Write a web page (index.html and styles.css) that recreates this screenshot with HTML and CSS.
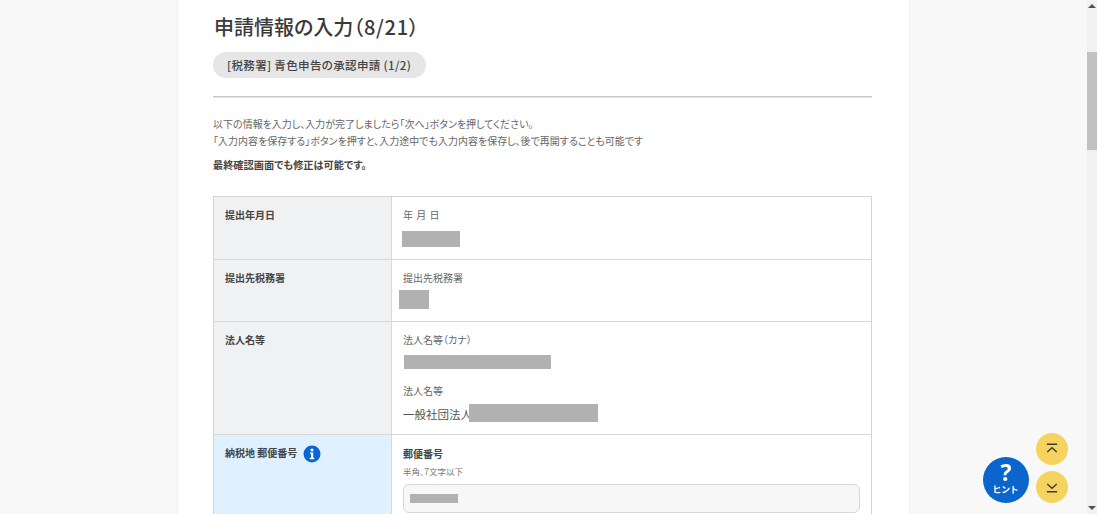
FILE: index.html
```html
<!DOCTYPE html>
<html lang="ja">
<head>
<meta charset="utf-8">
<title>申請情報の入力</title>
<link rel="stylesheet" href="styles.css">
</head>
<body>
<div class="viewport">
  <main class="page">
    <section class="card">
      <h1 class="title">申請情報の入力<span class="count">（8/21）</span></h1>
      <div class="pill">[税務署] 青色申告の承認申請 (1/2)</div>
      <hr class="rule">
      <p class="intro">以下の情報を入力し、入力が完了しましたら「次へ」ボタンを押してください。<br>「入力内容を保存する」ボタンを押すと、入力途中でも入力内容を保存し、後で再開することも可能です</p>
      <p class="note">最終確認画面でも修正は可能です。</p>
      <div class="form">
        <div class="row row-date">
          <div class="head">提出年月日</div>
          <div class="cell">
            <div class="label label-date">年 月 日</div>
            <div class="mask mask-date"></div>
          </div>
        </div>
        <div class="row row-office">
          <div class="head">提出先税務署</div>
          <div class="cell">
            <div class="label">提出先税務署</div>
            <div class="mask mask-office"></div>
          </div>
        </div>
        <div class="row row-name">
          <div class="head">法人名等</div>
          <div class="cell">
            <div class="label">法人名等（カナ）</div>
            <div class="mask mask-kana"></div>
            <div class="label label-gap">法人名等</div>
            <div class="value"><span class="value-text">一般社団法人</span><span class="mask mask-name"></span></div>
          </div>
        </div>
        <div class="row row-zip">
          <div class="head head-info">納税地 郵便番号
            <svg class="info" viewBox="0 0 18 18" aria-hidden="true"><circle cx="9" cy="9" r="8.5" fill="#0a66d0"/><circle cx="9" cy="4.900" r="1.500" fill="#fff"/><path d="M6.900 7.400h3.300v5.400h1.100v1.400H6.800v-1.400h1.300V8.800H6.900z" fill="#fff"/></svg>
          </div>
          <div class="cell">
            <div class="label-strong">郵便番号</div>
            <div class="hint">半角、7文字以下</div>
            <div class="input"><span class="mask mask-zip"></span></div>
          </div>
        </div>
      </div>
    </section>
  </main>
  <aside class="scrollbar">
    <div class="arrow arrow-up"></div>
    <div class="track"><div class="thumb"></div></div>
    <div class="arrow arrow-down"></div>
  </aside>
</div>
<div class="float-top">
  <svg viewBox="0 0 16 14" aria-hidden="true"><path d="M2 1.500h12M2.500 10.500 8 5.500l5.500 5" fill="none" stroke="#3c3c3c" stroke-width="1.600"/></svg>
</div>
<div class="float-bottom">
  <svg viewBox="0 0 16 14" aria-hidden="true"><path d="M2.500 3.500 8 8.500l5.500-5M2 12.500h12" fill="none" stroke="#3c3c3c" stroke-width="1.600"/></svg>
</div>
<div class="float-hint"><span class="q">?</span><span class="hint-text">ヒント</span></div>
</body>
</html>
```
FILE: styles.css
```css
* { box-sizing: border-box; }
html, body { margin: 0; height: 514px; overflow: hidden; }
body {
  font-family: "Noto Sans CJK JP", "Noto Sans", sans-serif;
  color: #333;
  background: #f8f8f8;
  font-feature-settings: "palt";
}
.viewport { display: flex; height: 514px; }
.page { flex: 1; display: flex; justify-content: center; min-width: 0; overflow: hidden; }
.card {
  width: 733px;
  background: #fff;
  border-left: 1px solid #f0f0f0;
  border-right: 1px solid #f0f0f0;
  padding: 12px 37px 0 35px;
  height: 800px;
  flex: none;
}
.title { margin: 0; font-size: 20px; line-height: 30px; font-weight: 500; color: #3a3a3a; padding-left: 1px; }
.count { letter-spacing: .7px; }
.pill {
  margin-top: 10px;
  width: 213px;
  height: 26px;
  border-radius: 13px;
  background: #e6e6e6;
  font-size: 11.5px;
  font-weight: 500;
  line-height: 26px;
  padding-left: 14px;
  letter-spacing: .35px;
  color: #444;
}
.rule { margin: 18px 0 0; border: 0; border-top: 1px solid #c8c8c8; border-bottom: 1px solid #e4e4e4; height: 2px; }
.intro { margin: 17px 0 0; font-size: 10px; line-height: 17px; color: #666; }
.note { margin: 7px 0 0; font-size: 10.2px; line-height: 17px; font-weight: 700; color: #444; }
.form { margin-top: 23px; border: 1px solid #d4d4d4; border-bottom: 0; width: 659px; }
.row { display: flex; border-bottom: 1px solid #d8d8d8; }
.row-date { height: 63px; }
.row-office { height: 62px; }
.row-name { height: 113px; }
.row-zip { height: 200px; }
.head {
  width: 178px;
  flex: none;
  background: #f0f1f3;
  border-right: 1px solid #d8d8d8;
  padding: 10px 0 0 11px;
  font-size: 10px;
  line-height: 16px;
  font-weight: 700;
  color: #444;
}
.row-zip .head { background: #dff0ff; }
.head-info { display: flex; align-items: flex-start; gap: 6px; }
.info { width: 18px; height: 18px; flex: none; }
.cell { flex: 1; padding: 10px 11px 0 11px; min-width: 0; }
.label { font-size: 10px; line-height: 16px; color: #666; }
.label-date { word-spacing: 1px; }
.label-gap { margin-top: 14px; }
.label-strong { font-size: 10px; line-height: 16px; font-weight: 700; color: #444; padding-top: 1px; }
.hint { font-size: 8.5px; line-height: 14px; margin-top: 2px; color: #777; }
.mask { display: block; background: #b1b1b1; }
.mask-date { width: 58px; height: 16px; margin: 8px 0 0 -1px; }
.mask-office { width: 30px; height: 19px; margin: 4px 0 0 -4px; }
.mask-kana { width: 147px; height: 14px; margin: 7px 0 0 1px; }
.value { display: flex; align-items: center; font-size: 11.5px; line-height: 18px; color: #555; margin-top: 4px; }
.value-text { padding-top: 2px; }
.mask-name { width: 129px; height: 18px; margin-left: -3px; }
.input {
  margin-top: 6px;
  height: 29px;
  width: 457px;
  background: #f7f7f7;
  border: 1px solid #d8d8d8;
  border-radius: 6px;
  padding: 9px 0 0 6px;
}
.mask-zip { width: 48px; height: 9px; }
.scrollbar { width: 10px; background: #f1f1f1; flex: none; display: flex; flex-direction: column; position: relative; }
.track { flex: 1; }
.thumb { height: 98px; margin-top: 35px; background: #c1c1c1; }
.arrow { height: 17px; flex: none; position: relative; }
.arrow::after { content: ""; position: absolute; left: 1px; border-left: 4px solid transparent; border-right: 4px solid transparent; }
.arrow-up::after { top: 4px; border-bottom: 4px solid #505050; }
.arrow-down::after { bottom: 4px; border-top: 4px solid #505050; }
.float-top, .float-bottom {
  position: fixed;
  left: 1036px;
  width: 32px;
  height: 32px;
  border-radius: 50%;
  background: #f5d35f;
  display: flex;
  align-items: center;
  justify-content: center;
}
.float-top { top: 433px; }
.float-bottom { top: 471px; }
.float-top svg, .float-bottom svg { width: 14px; height: 12px; }
.float-hint {
  position: fixed;
  left: 983px;
  top: 457px;
  width: 46px;
  height: 46px;
  border-radius: 50%;
  background: #0a66cc;
  color: #fff;
  display: flex;
  flex-direction: column;
  align-items: center;
}
.q { font-size: 23px; line-height: 18px; font-weight: 700; margin-top: 6px; font-family: "Noto Sans", sans-serif; }
.hint-text { font-size: 9px; line-height: 10px; font-weight: 700; letter-spacing: .8px; margin-top: 4px; }
```
